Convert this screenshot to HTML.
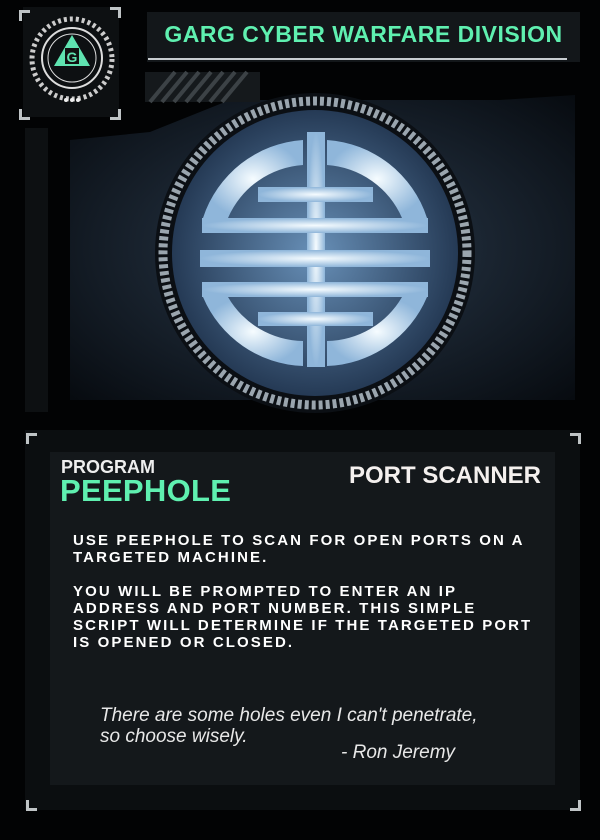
<!DOCTYPE html>
<html><head><style>
body{margin:0;width:600px;height:840px;background:#020304;position:relative;overflow:hidden;font-family:"Liberation Sans",sans-serif}
.abs{position:absolute}
.br{position:absolute;width:8px;height:8px;border-color:#bfc4c6;border-style:solid;border-width:0}
.t{color:#fff;font-weight:bold;text-transform:uppercase;letter-spacing:2.1px;font-size:15px;line-height:17px}
</style></head><body>
<svg class="abs" style="left:0;top:0" width="600" height="430">
<defs>
<radialGradient id="bg" cx="0.5" cy="0.5" r="0.7"><stop offset="0" stop-color="#2b3b4d"/><stop offset="1" stop-color="#070b10"/></radialGradient>
<radialGradient id="disc" cx="0.5" cy="0.5" r="0.5"><stop offset="0" stop-color="#6890b8"/><stop offset="1" stop-color="#253a55"/></radialGradient>
<radialGradient id="sym" cx="0.5" cy="0.5" r="0.5"><stop offset="0" stop-color="#f6fcff"/><stop offset="1" stop-color="#8fb6da"/></radialGradient>
</defs>
<rect x="25" y="128" width="23" height="284" fill="#0d1012"/>
<polygon points="70,140 150,132 230,100 500,100 575,95 575,400 70,400" fill="url(#bg)"/>
<rect x="145" y="72" width="115" height="30" fill="#15191c"/>
<g stroke="#3c4246" stroke-width="4"><line x1="150" y1="102" x2="175" y2="72"/><line x1="162" y1="102" x2="187" y2="72"/><line x1="174" y1="102" x2="199" y2="72"/><line x1="186" y1="102" x2="211" y2="72"/><line x1="198" y1="102" x2="223" y2="72"/><line x1="210" y1="102" x2="235" y2="72"/><line x1="222" y1="102" x2="247" y2="72"/></g>
<circle cx="315" cy="253" r="160" fill="#0b0f14"/>
<circle cx="315" cy="253" r="152" fill="none" stroke="#9aa5ae" stroke-width="9" stroke-dasharray="4 3"/>
<circle cx="315" cy="253" r="143" fill="url(#disc)"/>
<g fill="url(#sym)">
<path d="M 303 140 A 113 113 0 0 0 203 218 L 228 218 A 88 88 0 0 1 303 165 Z"/>
<path d="M 327 140 A 113 113 0 0 1 427 218 L 402 218 A 88 88 0 0 0 327 165 Z"/>
<path d="M 303 366 A 113 113 0 0 1 203 297 L 228 297 A 88 88 0 0 0 303 341 Z"/>
<path d="M 327 366 A 113 113 0 0 0 427 297 L 402 297 A 88 88 0 0 1 327 341 Z"/>
<rect x="307" y="132" width="18" height="235"/>
<rect x="258" y="187" width="115" height="15"/>
<rect x="202" y="218" width="226" height="15"/>
<rect x="200" y="250" width="230" height="17"/>
<rect x="202" y="282" width="226" height="15"/>
<rect x="258" y="312" width="115" height="14"/>
</g>
</svg>
<div class="abs" style="left:23px;top:7px;width:96px;height:110px;background:#0d1012"></div>
<div class="br" style="left:19px;top:10px;border-top-width:3px;border-left-width:3px"></div>
<div class="br" style="left:110px;top:7px;border-top-width:3px;border-right-width:3px"></div>
<div class="br" style="left:19px;top:109px;border-bottom-width:3px;border-left-width:3px"></div>
<div class="br" style="left:110px;top:109px;border-bottom-width:3px;border-right-width:3px"></div>
<svg class="abs" style="left:28px;top:14px" width="88" height="90">
<circle cx="44" cy="45" r="40" fill="none" stroke="#ccc" stroke-width="5" stroke-dasharray="3 3"/>
<circle cx="44" cy="44" r="30" fill="none" stroke="#ddd" stroke-width="2"/>
<circle cx="44" cy="44" r="24" fill="none" stroke="#ddd" stroke-width="1"/>
<polygon points="44,21 62,52 26,52" fill="#5fe3b0"/>
<rect x="37" y="34" width="14" height="16" fill="#111"/>
<text x="44" y="48" font-size="14" font-weight="bold" fill="#5fe3b0" text-anchor="middle">G</text>
<circle cx="38" cy="86" r="2" fill="#eee"/><circle cx="44" cy="86" r="2" fill="#eee"/><circle cx="50" cy="86" r="2" fill="#eee"/>
</svg>
<div class="abs" style="left:147px;top:12px;width:433px;height:50px;background:#13171a"></div>
<div class="abs" style="left:147px;top:21px;width:433px;text-align:center;color:#5ff0b0;font-weight:bold;font-size:23px;letter-spacing:0.5px">GARG CYBER WARFARE DIVISION</div>
<div class="abs" style="left:148px;top:58px;width:419px;height:2px;background:#c8cdd0"></div>
<div class="abs" style="left:25px;top:430px;width:555px;height:380px;background:#0b0e10"></div>
<div class="br" style="left:26px;top:433px;border-top-width:3px;border-left-width:3px"></div>
<div class="br" style="left:570px;top:433px;border-top-width:3px;border-right-width:3px"></div>
<div class="br" style="left:26px;top:800px;border-bottom-width:3px;border-left-width:3px"></div>
<div class="br" style="left:570px;top:800px;border-bottom-width:3px;border-right-width:3px"></div>
<div class="abs" style="left:50px;top:452px;width:505px;height:333px;background:#14181b"></div>
<div class="abs" style="left:61px;top:457px;color:#eee;font-weight:bold;font-size:18px">PROGRAM</div>
<div class="abs" style="left:60px;top:473px;color:#5ff0b0;font-weight:bold;font-size:31px;letter-spacing:0.3px">PEEPHOLE</div>
<div class="abs" style="left:349px;top:462px;color:#f4f0ee;font-weight:bold;font-size:24px">PORT SCANNER</div>
<div class="abs t" style="left:73px;top:532px;width:470px">USE PEEPHOLE TO SCAN FOR OPEN PORTS ON A TARGETED MACHINE.<br><br>YOU WILL BE PROMPTED TO ENTER AN IP ADDRESS AND PORT NUMBER. THIS SIMPLE SCRIPT WILL DETERMINE IF THE TARGETED PORT IS OPENED OR CLOSED.</div>
<div class="abs" style="left:100px;top:705px;color:#e8e8e8;font-style:italic;font-size:19px;line-height:21px">There are some holes even I can't penetrate,<br>so choose wisely.</div>
<div class="abs" style="left:341px;top:742px;color:#e8e8e8;font-style:italic;font-size:19px">- Ron Jeremy</div>
</body></html>
